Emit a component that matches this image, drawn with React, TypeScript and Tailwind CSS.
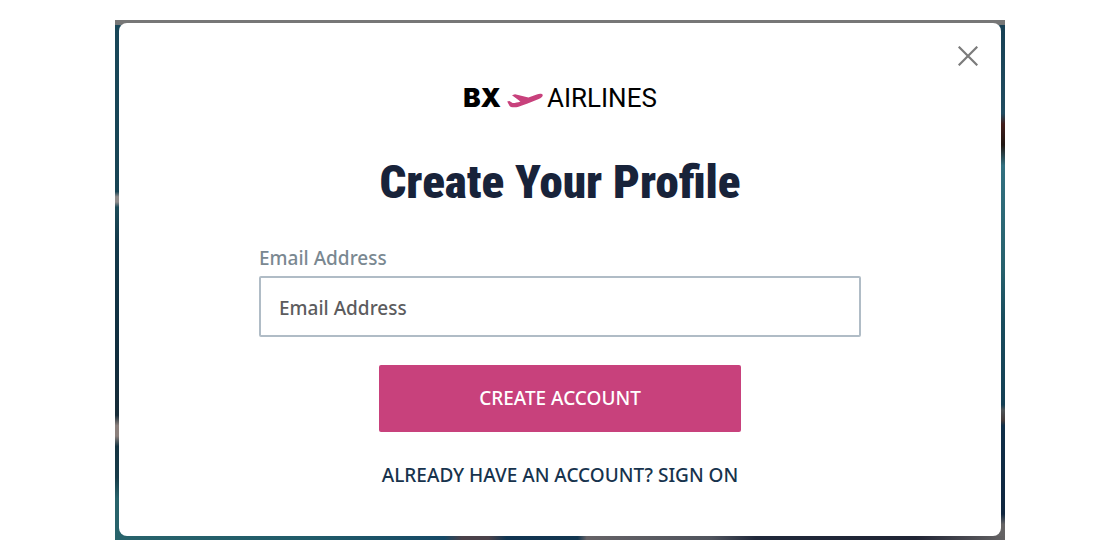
import { useState } from 'react';

function Plane() {
  return (
    <svg viewBox="0 0 36 16" className="h-4 w-9 shrink-0" aria-hidden="true">
      <path
        fill="#c8417c"
        d="M0.2 9.4 L2.4 8.9 L5.6 10.9 C8 11 10.5 10.4 13.4 9.4 L5 3.3 L8 2.2 L21.4 5.4 L29.8 2.4 C32.8 1.5 35.2 1.7 35.7 2.9 C36.1 4.3 34.2 6.1 31.8 7.1 L20.6 11.6 L10.8 14.9 C8.6 15.5 5.8 15.3 4 15 C2.8 14.6 2.3 13.6 1.8 12.6 Z"
      />
    </svg>
  );
}

function Logo() {
  return (
    <div className="flex items-center text-black">
      <span className="font-[Inter,sans-serif] text-[26px] leading-8 font-black">BX</span>
      <span className="mr-1 ml-1.5 flex pt-1">
        <Plane />
      </span>
      <span className="font-[Roboto,sans-serif] text-[26px] leading-8">AIRLINES</span>
    </div>
  );
}

export default function App() {
  const [email, setEmail] = useState('');

  return (
    <main className="min-h-screen bg-white py-5 font-['Noto_Sans',sans-serif]">
      <div className="mx-auto w-full max-w-[890px] bg-[linear-gradient(#777777,#777777),linear-gradient(90deg,#28636b_0%,#205b69_22%,#164966_37%,#4a4149_39%,#4a4149_42%,#113451_44%,#123650_52%,#656266_53%,#50545d_67%,#20283a_72%,#202434_90%,#656364_100%),linear-gradient(#194759_0%,#174454_33%,#8f8c8c_34%,#8f8c8c_35%,#1d4b59_36%,#12394a_43%,#102d3d_65%,#172c38_76%,#8b807c_78%,#8b807c_80%,#153442_82%,#173c49_88%,#28636b_92%),linear-gradient(#174054_0%,#214c60_18%,#421e1c_20%,#201613_24%,#327080_28%,#27616d_48%,#194c5d_58%,#143f54_74%,#4d5356_75%,#433b3b_77%,#102f48_78%,#10263f_95%,#656364_97%)] bg-[size:100%_5px,100%_4px,50%_100%,50%_100%] bg-[position:top,bottom,left,right] bg-no-repeat px-1 pt-[3px] pb-1">
        <section
          aria-labelledby="profile-heading"
          className="relative flex flex-col items-center rounded-lg bg-white px-8 pt-[59px] pb-[45px]"
        >
          <button
            type="button"
            aria-label="Close"
            className="absolute top-[17px] right-[17px] flex size-8 items-center justify-center text-[#7b7b7b]"
          >
            <svg viewBox="0 0 20 20" className="size-5" fill="none" stroke="currentColor" strokeWidth="2.2" aria-hidden="true">
              <path d="M0.7 0.7 L19.3 19.3 M19.3 0.7 L0.7 19.3" />
            </svg>
          </button>

          <Logo />

          <h1
            id="profile-heading"
            className="mt-9 text-center font-['Roboto_Condensed',Roboto,sans-serif] text-[47px] leading-[64px] font-black text-[#18233a]"
          >
            Create Your Profile
          </h1>

          <form className="mt-[30px] flex w-full max-w-[602px] flex-col items-center" onSubmit={(e) => e.preventDefault()}>
            <label htmlFor="email" className="w-full text-[19px] leading-7 font-medium text-[#7a8891]">
              Email Address
            </label>
            <input
              id="email"
              type="email"
              value={email}
              onChange={(e) => setEmail(e.target.value)}
              placeholder="Email Address"
              className="mt-1 h-[61px] w-full rounded-xs border-2 border-[#b0bcc6] px-[18px] pt-0.5 text-[19px] font-medium text-[#5c5c5e] placeholder:text-[#5c5c5e]"
            />
            <button
              type="submit"
              className="mt-7 h-[67px] w-full max-w-[362px] rounded-xs bg-[#c8417c] text-[19px] font-medium text-white"
            >
              CREATE ACCOUNT
            </button>
          </form>

          <a href="#sign-on" className="mt-[27px] text-[19px] leading-8 font-medium text-[#17334d]">
            ALREADY HAVE AN ACCOUNT? SIGN ON
          </a>
        </section>
      </div>
    </main>
  );
}
